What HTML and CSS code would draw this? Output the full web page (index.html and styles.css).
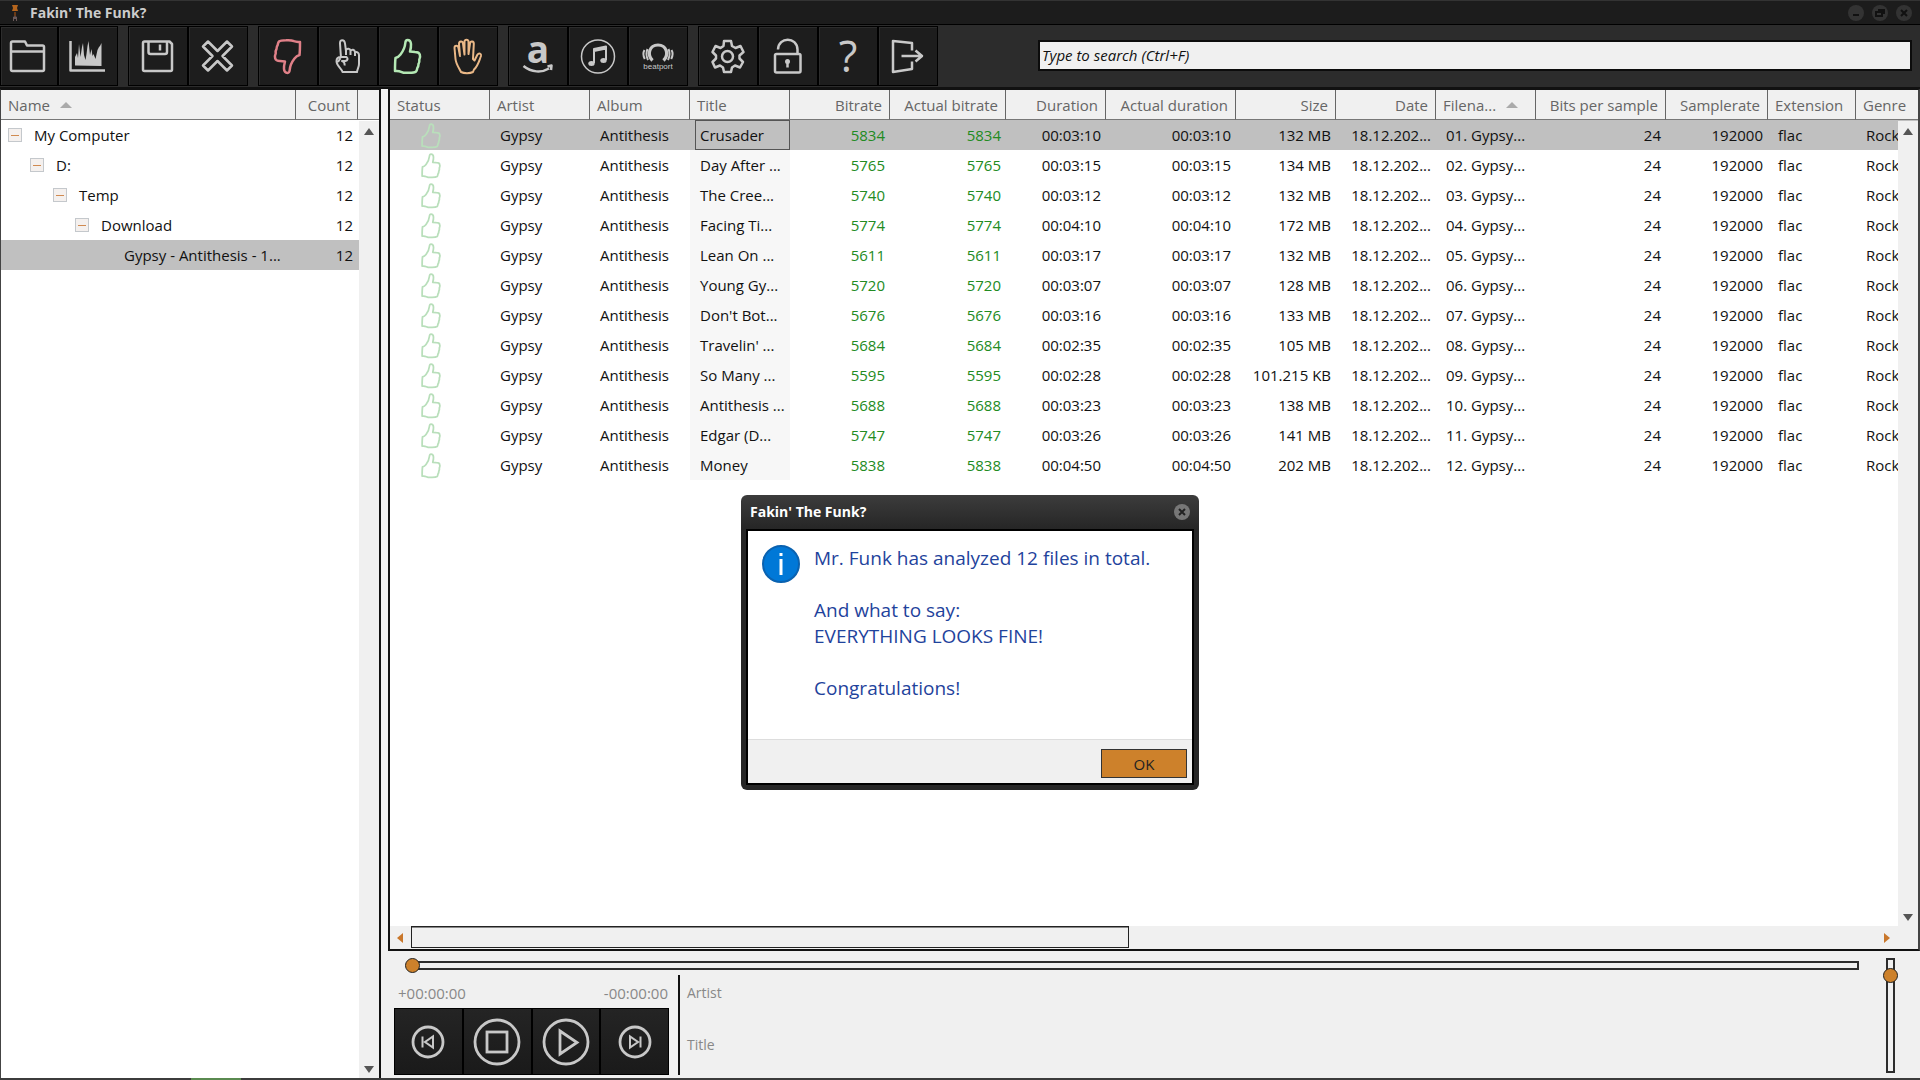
FILE: index.html
```html
<!DOCTYPE html>
<html lang="en">
<head>
    <meta charset="UTF-8">
    <meta name="viewport" content="width=device-width, initial-scale=1.0">
    <title>Fakin' The Funk?</title>
    <link rel="stylesheet" href="styles.css">
</head>
<body>
    <!-- shared icon shapes -->
    <svg class="symbols" aria-hidden="true">
        <symbol id="thumb" viewBox="0 0 60 60">
            <path stroke-linejoin="round" d="M29.5 14C28 14 27.500 15 27.300 17C27 21 26 24 22.500 28.500C21 30.500 19.500 31.500 17.500 32C17 36 17 41 17 45C19 45.200 21 45 23 45.800C25 46.800 28 47 31 46.800C34 46.800 36.500 46.800 38 45.500C39 44.500 39 43.500 39.300 42C40.500 40.500 40.500 39.500 40.500 38C41.500 36.500 41.500 35 41.300 33.500C42.300 31.500 42.300 30 41.800 28.500C41.200 26.500 39.500 26 37 26L32 25.500C32.800 22.500 33.200 20.500 33 18C32.800 15.500 31.500 14 29.500 14z"/>
        </symbol>
    </svg>

    <div class="window">
        <header class="titlebar">
            <svg class="app-icon" viewBox="0 0 8 18" aria-hidden="true">
                <path class="orange" d="M1 1h6L6 4l1 3H1l1-3z"/>
                <path class="rust" d="M3 8h2v4H3z"/>
                <path class="dim" d="M2 13l2-1 2 1v4H5v-2H3v2H2z"/>
            </svg>
            <h1>Fakin' The Funk?</h1>
            <div class="window-buttons">
                <button type="button" aria-label="Minimize"><svg viewBox="0 0 16 16"><path d="M5 10h6"/></svg></button>
                <button type="button" aria-label="Restore"><svg viewBox="0 0 16 16"><path d="M6 5h6v4M4 7h6v4H4z"/></svg></button>
                <button type="button" aria-label="Close"><svg viewBox="0 0 16 16"><path d="M5 5l6 6M11 5l-6 6"/></svg></button>
            </div>
        </header>

        <nav class="toolbar">
            <div class="tool-group first">
                <button type="button" aria-label="Open folder">
                    <svg viewBox="0 0 60 60"><path d="M12 17q0-1.500 1.500-1.500H26l2 4h15.500q1.500 0 1.500 1.500V43.500q0 1.500-1.500 1.500h-30q-1.500 0-1.500-1.500zM12 25.500h33"/></svg>
                </button>
                <button type="button" aria-label="Spectrum">
                    <svg viewBox="0 0 60 60"><path d="M12.500 15v29.500H47"/><path class="solid" d="M17 39.500V31l2-4 1 5 1-14 1.500 13 1.500-10 1-4 1 12 1.500 5 1-6 1-8 1-5 1.500 14 1.500-6 1 7 1-2 2 5 2-9 1.500-3 1-1 1.500-3v23z"/></svg>
                </button>
            </div>
            <div class="tool-group">
                <button type="button" aria-label="Save">
                    <svg viewBox="0 0 60 60"><path d="M15 17q0-1.500 1.500-1.500h25l2.500 2.500v25.500q0 1.500-1.500 1.500h-26q-1.500 0-1.500-1.500zM20.500 16v10q0 2 2 2h14.500q2 0 2-2V16M32 18.500v6"/></svg>
                </button>
                <button type="button" aria-label="Delete">
                    <svg viewBox="0 0 60 60"><path d="M20 15.500l9.500 9.500 9.500-9.500 5 5-9.500 9.500 9.500 9.500-5 5-9.500-9.500-9.500 9.500-5-5 9.500-9.500-9.500-9.500z"/></svg>
                </button>
            </div>
            <div class="tool-group">
                <button type="button" class="bad" aria-label="Mark as bad">
                    <svg viewBox="0 0 60 60"><use href="#thumb" width="60" height="60" transform="rotate(180 29.500 30.500)"/></svg>
                </button>
                <button type="button" aria-label="Mark as checked">
                    <svg viewBox="0 0 60 60"><path class="fine" d="M23 32l-1-14.500c-.3-4.500 4.500-4.500 5 0L28 25M28 29v-5c1-2 4-1.500 4.500.5V29M32.500 25c1.500-2 4-1.500 4.500 1V30M37 26.500c1.500-1 4 0 4 2.500v9c0 3-1.500 4.500-2 8H24.500c-1-4-6-6-6-11 0-3 2-4 4.500-4h5.500c2 1.500 1 3.500-1 4h-3.500c2 .5 3 2.500 2.500 4.500M22.500 32l-2.500 4"/></svg>
                </button>
                <button type="button" class="good" aria-label="Mark as good">
                    <svg viewBox="0 0 60 60"><use href="#thumb" width="60" height="60"/></svg>
                </button>
                <button type="button" class="hold" aria-label="Put on hold">
                    <svg viewBox="0 0 60 60"><path class="fine" d="M23 46c-2-4-5-8-5.500-13l-1-11c0-3 3.500-3 4 0l1.500 8-1-12c0-3 3.500-3.500 4-.5l1.500 11V15.500c.3-2.500 3.700-2.500 4 0V28l1.500-10.500c.5-3 4-2.500 3.800.5L35 33l1.500 1.500 3-6c1.500-2 4-1 3.500 1.500-2 5-3 10-7 13.500L35 46c-3 1.500-9 1.500-12 0z"/></svg>
                </button>
            </div>
            <div class="tool-group">
                <button type="button" aria-label="Search on Amazon">
                    <svg viewBox="0 0 60 60"><text class="letter" x="30" y="37" font-size="37">a</text><path d="M15.500 40c8 6.500 18 7 25.500 2.500M39.500 40.500l4-1-.5 4.500"/></svg>
                </button>
                <button type="button" aria-label="Search on iTunes">
                    <svg viewBox="0 0 60 60"><circle class="thin" cx="30" cy="30.500" r="16.500"/><path class="fine" d="M26 37V23l12-2.500V34M26 25l12-2.500"/><ellipse class="solid" cx="23.500" cy="37.500" rx="3.200" ry="2.500"/><ellipse class="solid" cx="35.500" cy="34.500" rx="3.200" ry="2.500"/></svg>
                </button>
                <button type="button" aria-label="Search on Beatport">
                    <svg viewBox="0 0 60 60"><path class="thick" d="M24.500 34.500c-6-6-3-15.500 5.500-15.500s11.500 9.500 5.500 15.500"/><path class="fine" d="M19.500 23c-1.500 3.500-1.500 7 .5 11M40.500 23c1.500 3.500 1.500 7-.5 11M16.500 24c-1.500 2.500-1.300 6 .3 9M43.500 24c1.500 2.500 1.300 6-.3 9"/><text class="word" x="30" y="43" font-size="8">beatport</text></svg>
                </button>
            </div>
            <div class="tool-group">
                <button type="button" aria-label="Settings">
                    <svg viewBox="0 0 60 60"><path d="M26 15h7l1 5 3.500 2 5-2 3 6-4 3.500v3L45 36l-3 5.500-5-2-3 2-1 4.500h-7l-1-4.500-3-2-5 2L14.500 36l3.500-3.500v-3L14.500 26l3-6 5 2 3-2z"/><circle cx="29.500" cy="30.500" r="5.500"/></svg>
                </button>
                <button type="button" aria-label="License">
                    <svg viewBox="0 0 60 60"><rect x="17" y="28" width="25.500" height="18.500" rx="1.500"/><path d="M20 23.500c.5-13 19-13 19.500 0V28"/><circle class="solid" cx="29.500" cy="35.500" r="2.500"/><path d="M29.500 36v5.500"/></svg>
                </button>
                <button type="button" aria-label="Help">
                    <svg viewBox="0 0 60 60"><text class="question" x="30" y="46" font-size="43">?</text></svg>
                </button>
                <button type="button" aria-label="Exit">
                    <svg viewBox="0 0 60 60"><path d="M34 24.500V17L15 15v31l19-3v-7.500M23.500 30H43M37.500 24.500L44 30l-6.500 5.500"/></svg>
                </button>
            </div>
            <input class="search" type="text" placeholder="Type to search (Ctrl+F)" aria-label="Search">
        </nav>

        <div class="main">
            <aside class="panel folders">
                <table class="grid">
                    <colgroup>
                        <col>
                        <col class="w-count">
                        <col class="w-gutter">
                    </colgroup>
                    <thead>
                        <tr><th>Name <span class="sort"></span></th><th class="num">Count</th><th></th></tr>
                    </thead>
                    <tbody>
                        <tr><td class="level-1"><button type="button" class="toggle" aria-label="Collapse"></button>My Computer</td><td class="num">12</td><td></td></tr>
                        <tr><td class="level-2"><button type="button" class="toggle" aria-label="Collapse"></button>D:</td><td class="num">12</td><td></td></tr>
                        <tr><td class="level-3"><button type="button" class="toggle" aria-label="Collapse"></button>Temp</td><td class="num">12</td><td></td></tr>
                        <tr><td class="level-4"><button type="button" class="toggle" aria-label="Collapse"></button>Download</td><td class="num">12</td><td></td></tr>
                        <tr class="selected"><td class="level-5">Gypsy - Antithesis - 1...</td><td class="num">12</td><td></td></tr>
                    </tbody>
                </table>
                <div class="vscroll">
                    <span class="arrow up"></span>
                    <span class="arrow down"></span>
                </div>
            </aside>

            <div class="content">
                <section class="panel tracks">
                    <table class="grid">
                        <colgroup>
                            <col class="w-100"><col class="w-100"><col class="w-100"><col class="w-100"><col class="w-100">
                            <col class="w-116"><col class="w-100"><col class="w-130"><col class="w-100"><col class="w-100">
                            <col class="w-100"><col class="w-130"><col class="w-102"><col class="w-88"><col>
                        </colgroup>
                        <thead>
                            <tr>
                                <th>Status</th>
                                <th>Artist</th>
                                <th>Album</th>
                                <th>Title</th>
                                <th class="num">Bitrate</th>
                                <th class="num">Actual bitrate</th>
                                <th class="num">Duration</th>
                                <th class="num">Actual duration</th>
                                <th class="num">Size</th>
                                <th class="num">Date</th>
                                <th>Filena... <span class="sort"></span></th>
                                <th class="num">Bits per sample</th>
                                <th class="num">Samplerate</th>
                                <th>Extension</th>
                                <th>Genre</th>
                            </tr>
                        </thead>
                        <tbody id="track-list"></tbody>
                    </table>
                    <div class="vscroll">
                        <span class="arrow up"></span>
                        <span class="arrow down"></span>
                    </div>
                    <div class="hscroll">
                        <span class="arrow left"></span>
                        <div class="hscroll-rail"><div class="hscroll-thumb"></div></div>
                        <span class="arrow right"></span>
                    </div>
                </section>

                <section class="player">
                    <div class="player-main">
                        <input class="seek" type="range" min="0" max="100" value="0" aria-label="Position">
                        <div class="player-row">
                            <div class="controls">
                                <div class="times"><span>+00:00:00</span><span>-00:00:00</span></div>
                                <div class="control-buttons">
                                    <button type="button" aria-label="Previous">
                                        <svg viewBox="0 0 66 66"><circle cx="33" cy="33" r="15"/><path class="fine" d="M27.500 27.500v11M38 27.500v11L30 33z"/></svg>
                                    </button>
                                    <button type="button" aria-label="Stop">
                                        <svg viewBox="0 0 66 66"><circle cx="33" cy="33" r="22"/><rect x="23" y="23" width="20" height="20"/></svg>
                                    </button>
                                    <button type="button" aria-label="Play">
                                        <svg viewBox="0 0 66 66"><circle cx="33" cy="33" r="22"/><path d="M27 22v23l17-11.500z"/></svg>
                                    </button>
                                    <button type="button" aria-label="Next">
                                        <svg viewBox="0 0 66 66"><circle cx="33" cy="33" r="15"/><path class="fine" d="M38.500 27.500v11M28 27.500v11l8-5.500z"/></svg>
                                    </button>
                                </div>
                            </div>
                            <div class="now-playing">
                                <span>Artist</span>
                                <span>Title</span>
                            </div>
                        </div>
                    </div>
                    <input class="volume" type="range" min="0" max="100" value="92" aria-label="Volume">
                </section>
            </div>
        </div>
        <div class="bottom-edge"><span></span></div>
    </div>

    <div class="message" role="dialog" aria-labelledby="message-title">
        <div class="message-title">
            <h2 id="message-title">Fakin' The Funk?</h2>
            <button type="button" aria-label="Close"><svg viewBox="0 0 16 16"><path d="M5 5l6 6M11 5l-6 6"/></svg></button>
        </div>
        <div class="message-frame">
            <div class="message-body">
                <svg class="info" viewBox="0 0 38 38" aria-hidden="true">
                    <circle cx="19" cy="19" r="18"/>
                    <path d="M19 14v16M19 8v3"/>
                </svg>
                <p>Mr. Funk has analyzed 12 files in total.<br><br>And what to say:<br>EVERYTHING LOOKS FINE!<br><br>Congratulations!</p>
            </div>
            <div class="message-footer">
                <button type="button">OK</button>
            </div>
        </div>
    </div>

    <script>
        // title, bitrate, duration, size
        const tracks = [
            ["Crusader", 5834, "00:03:10", "132 MB"],
            ["Day After ...", 5765, "00:03:15", "134 MB"],
            ["The Cree...", 5740, "00:03:12", "132 MB"],
            ["Facing Ti...", 5774, "00:04:10", "172 MB"],
            ["Lean On ...", 5611, "00:03:17", "132 MB"],
            ["Young Gy...", 5720, "00:03:07", "128 MB"],
            ["Don't Bot...", 5676, "00:03:16", "133 MB"],
            ["Travelin' ...", 5684, "00:02:35", "105 MB"],
            ["So Many ...", 5595, "00:02:28", "101.215 KB"],
            ["Antithesis ...", 5688, "00:03:23", "138 MB"],
            ["Edgar (D...", 5747, "00:03:26", "141 MB"],
            ["Money", 5838, "00:04:50", "202 MB"]
        ];

        const list = document.getElementById("track-list");

        tracks.forEach(([title, bitrate, duration, size], index) => {
            const tr = document.createElement("tr");
            const number = String(index + 1).padStart(2, "0");
            if (index === 0) {
                tr.className = "selected";
            }
            tr.innerHTML = `
                <td class="status"><svg viewBox="14 11 31 38"><use href="#thumb" width="60" height="60"/></svg></td>
                <td>Gypsy</td>
                <td>Antithesis</td>
                <td class="title"><span>${title}</span></td>
                <td class="num ok">${bitrate}</td>
                <td class="num ok">${bitrate}</td>
                <td class="num">${duration}</td>
                <td class="num">${duration}</td>
                <td class="num">${size}</td>
                <td class="num">18.12.202...</td>
                <td>${number}. Gypsy...</td>
                <td class="num">24</td>
                <td class="num">192000</td>
                <td>flac</td>
                <td>Rock</td>
            `;
            list.appendChild(tr);
        });
    </script>
</body>
</html>
```
FILE: styles.css
```css
* {
    box-sizing: border-box;
}

body {
    margin: 0;
    font-family: "Open Sans", "Noto Sans", sans-serif;
    font-size: 15px;
    color: #111;
    background-color: #f0f0f0;
}

button {
    padding: 0;
    border: none;
    font: inherit;
    cursor: pointer;
}

svg {
    display: block;
    fill: none;
    stroke: currentColor;
    stroke-width: 2;
}

.symbols {
    position: absolute;
    width: 0;
    height: 0;
}

.window {
    display: flex;
    flex-direction: column;
    height: 100vh;
    overflow: hidden;
}

/* title bar */
.titlebar {
    display: flex;
    align-items: center;
    height: 25px;
    padding: 0 8px 0 11px;
    background-color: #1c1c1c;
    border-top: 1px solid #333;
    border-bottom: 1px solid #000;
}

.app-icon {
    width: 8px;
    height: 18px;
    margin-right: 11px;
    stroke: none;
}

.orange {
    fill: #b5651d;
}

.rust {
    fill: #6b3a16;
}

.dim {
    fill: #6b5a5a;
}

h1,
h2 {
    margin: 0;
    font-size: 14px;
    line-height: 20px;
    color: #ccc;
}

.window-buttons {
    display: flex;
    gap: 8px;
    margin-left: auto;
}

.window-buttons button,
.message-title button {
    width: 16px;
    height: 16px;
    border-radius: 50%;
    background-color: #333;
    color: #111;
}

/* toolbar */
.toolbar {
    display: flex;
    align-items: center;
    height: 64px;
    padding-right: 8px;
    background-color: #2c2c2c;
    border-bottom: 2px solid #111;
}

.tool-group {
    display: flex;
    margin-right: 10px;
}

.tool-group button {
    display: flex;
    justify-content: center;
    width: 60px;
    height: 60px;
    background-color: #1d1d1d;
    border: 1px solid #000;
    box-shadow: inset 1px 1px 0 #2c2c2c;
    color: #c8c8c8;
}

.tool-group.first button:first-child {
    width: 58px;
}

.tool-group svg {
    flex: none;
    width: 60px;
    height: 60px;
    margin-top: -1px;
    stroke-width: 2.5;
    stroke-linejoin: round;
}

.tool-group .bad {
    color: #e08088;
}

.tool-group .good {
    color: #b4e8b4;
}

.tool-group .hold {
    color: #eab887;
}

svg .fine {
    stroke-width: 2;
}

svg .thin {
    stroke-width: 1.5;
}

svg .thick {
    stroke-width: 3.2;
}

svg .solid {
    fill: currentColor;
    stroke: none;
}

svg text {
    fill: currentColor;
    stroke: none;
    text-anchor: middle;
}

.letter {
    font-weight: 700;
}

.word {
    font-family: "Liberation Sans", sans-serif;
}

.question {
    font-family: "Open Sans", sans-serif;
    font-weight: 400;
}

.search {
    flex: 1;
    height: 31px;
    margin: 0 0 2px 90px;
    padding: 0 2px;
    border: 2px solid #0c0c0c;
    background-color: #f0f0f0;
    font: italic 15px "Open Sans", "Noto Sans", sans-serif;
    color: #111;
}

.search::placeholder {
    color: #111;
    opacity: 1;
}

/* panels */
.main {
    display: flex;
    flex: 1;
    min-height: 0;
}

.panel {
    display: grid;
    grid-template-columns: minmax(0, 1fr) 20px;
    grid-template-rows: 31px minmax(0, 1fr);
    background-color: #fff;
    border: 2px solid #111;
    border-top: 1px solid #111;
    overflow: hidden;
}

.folders {
    width: 381px;
    border-bottom: none;
    border-left: 1px solid #444;
}

.content {
    display: flex;
    flex: 1;
    flex-direction: column;
    min-width: 0;
    margin-left: 7px;
}

.tracks {
    flex: 1;
    grid-template-rows: 31px minmax(0, 1fr) 23px;
    min-height: 0;
    border-width: 1px 2px 2px 2px;
    border-right-color: #444;
}

.grid {
    grid-area: 1 / 1 / 3 / 3;
    align-self: start;
    width: 100%;
    table-layout: fixed;
    border-collapse: separate;
    border-spacing: 0;
}

.w-88 { width: 88px; }
.w-100 { width: 100px; }
.w-102 { width: 102px; }
.w-116 { width: 116px; }
.w-130 { width: 130px; }
.w-count { width: 62px; }
.w-gutter { width: 21px; }

.grid th,
.grid td {
    height: 30px;
    padding: 0 5px 0 10px;
    line-height: 20px;
    text-align: left;
    white-space: nowrap;
    overflow: hidden;
}

.grid th {
    padding: 0 7px;
    background-color: #f0f0f0;
    border-right: 1px solid #666;
    border-bottom: 1px solid #777;
    font-weight: 400;
    color: #666;
}

.grid th:last-child {
    border-right: none;
}

.grid .num {
    text-align: right;
}

.grid .ok {
    color: #228b22;
}

.selected td {
    background-color: #c0c0c0;
}

.grid .status {
    padding: 0 0 0 30px;
}

.status svg {
    width: 22px;
    height: 27px;
    color: #b9dfbb;
    stroke-width: 2.5;
}

.grid .title {
    background-color: #f7f7f7;
}

.grid .selected .title {
    padding: 0 0 0 5px;
    background-color: #c0c0c0;
}

.selected .title span {
    display: block;
    padding: 4px;
    border: 1px solid #555;
}

.sort {
    display: inline-block;
    margin: 0 0 3px 6px;
    border: 6px solid transparent;
    border-top: none;
    border-bottom: 6px solid #aaa;
}

/* folder tree */
.toggle {
    display: inline-block;
    width: 14px;
    height: 14px;
    margin-right: 12px;
    border: 1px solid #c4c8cc;
    background: linear-gradient(#d08a50, #d08a50) center / 8px 1px no-repeat #f4f0ee;
}

.grid .level-1 { padding-left: 7px; }
.grid .level-2 { padding-left: 29px; }
.grid .level-3 { padding-left: 52px; }
.grid .level-4 { padding-left: 74px; }
.grid .level-5 { padding-left: 123px; }

/* scroll bars */
.vscroll {
    grid-area: 2 / 2;
    display: flex;
    flex-direction: column;
    justify-content: space-between;
    align-items: center;
    padding: 7px 0 5px;
    background-color: #f0f0f0;
}

.arrow {
    border: 5px solid transparent;
}

.arrow.up {
    border-top: none;
    border-bottom: 7px solid #555;
}

.arrow.down {
    border-bottom: none;
    border-top: 7px solid #555;
}

.arrow.left {
    border-left: none;
    border-right: 6px solid #c9772b;
}

.arrow.right {
    border-right: none;
    border-left: 6px solid #c9772b;
}

.hscroll {
    grid-area: 3 / 1 / 4 / 3;
    display: flex;
    align-items: center;
    padding: 0 28px 0 7px;
    background-color: #f0f0f0;
}

.hscroll-rail {
    flex: 1;
    align-self: stretch;
    margin: 0 8px;
}

.hscroll-thumb {
    width: 49%;
    height: 22px;
    border: 1px solid #222;
    box-shadow: inset 0 1px 0 #888;
    background-color: #f0f0f0;
}

/* player */
.player {
    display: flex;
    height: 127px;
    padding: 7px 22px 3px 6px;
}

.player-main {
    display: flex;
    flex: 1;
    flex-direction: column;
}

input[type="range"] {
    appearance: none;
    margin: 0;
    background: none;
}

input[type="range"]::-webkit-slider-runnable-track {
    background-color: #f0f0f0;
    border: 2px solid #2c2c2c;
}

input[type="range"]::-webkit-slider-thumb {
    appearance: none;
    width: 15px;
    height: 15px;
    border: 1px solid #222;
    border-radius: 50%;
    background-color: #cd812b;
}

.player .seek {
    height: 15px;
    margin: 0 24px 0 11px;
}

.seek::-webkit-slider-runnable-track {
    height: 9px;
    margin-left: 7px;
}

.seek::-webkit-slider-thumb {
    margin-top: -5px;
    margin-left: -9px;
}

.volume {
    width: 15px;
    height: 115px;
    writing-mode: vertical-lr;
    direction: rtl;
}

.volume::-webkit-slider-runnable-track {
    width: 9px;
}

.volume::-webkit-slider-thumb {
    margin-left: -5px;
}

.player-row {
    display: flex;
    flex: 1;
    padding-top: 2px;
    font-size: 14px;
    color: #888;
}

.controls {
    display: flex;
    flex-direction: column;
    justify-content: space-between;
    width: 275px;
}

.times {
    display: flex;
    justify-content: space-between;
    padding: 8px 1px 0 4px;
    font-size: 15px;
    line-height: 20px;
}

.control-buttons {
    display: flex;
}

.control-buttons button {
    display: flex;
    flex: 1;
    justify-content: center;
    height: 67px;
    background: linear-gradient(#242424, #1a1a1a);
    border: 1px solid #000;
    color: #c8c8c8;
}

.control-buttons svg {
    width: 66px;
    height: 66px;
    stroke-width: 2.8;
}

.now-playing {
    display: flex;
    flex-direction: column;
    gap: 32px;
    margin-left: 9px;
    padding: 8px 0 0 7px;
    border-left: 2px solid #111;
    line-height: 20px;
}

.bottom-edge {
    height: 2px;
    padding-left: 191px;
    background-color: #3c3c3c;
}

.bottom-edge span {
    display: block;
    width: 50px;
    height: 2px;
    background-color: #5a8a50;
}

/* message box */
.message {
    position: absolute;
    top: 495px;
    left: 741px;
    width: 458px;
    padding: 0 5px 5px;
    border-radius: 6px;
    background: linear-gradient(#3c3c3c, #262626 34px);
}

.message-title {
    display: flex;
    align-items: center;
    justify-content: space-between;
    height: 34px;
    padding: 0 4px;
}

.message-title h2 {
    color: #fff;
}

.message-title button {
    background-color: #777;
    color: #222;
}

.message-frame {
    border: 2px solid #000;
    background-color: #f0f0f0;
}

.message-body {
    display: flex;
    gap: 14px;
    height: 209px;
    padding: 14px 14px 0;
    background-color: #fff;
    border-bottom: 1px solid #ddd;
}

.message-body p {
    margin: 0;
    font-size: 19px;
    line-height: 26px;
    color: #1f439c;
}

.info {
    flex: none;
    width: 38px;
    height: 38px;
    fill: #0078d7;
    stroke: #0a62b0;
}

.info path {
    stroke: #fff;
    stroke-width: 3;
}

.message-footer {
    display: flex;
    justify-content: flex-end;
    padding: 9px 5px 5px;
}

.message-footer button {
    width: 86px;
    height: 29px;
    border: 1px solid #333;
    background-color: #cd812b;
    font-size: 15px;
    color: #222;
}
```
